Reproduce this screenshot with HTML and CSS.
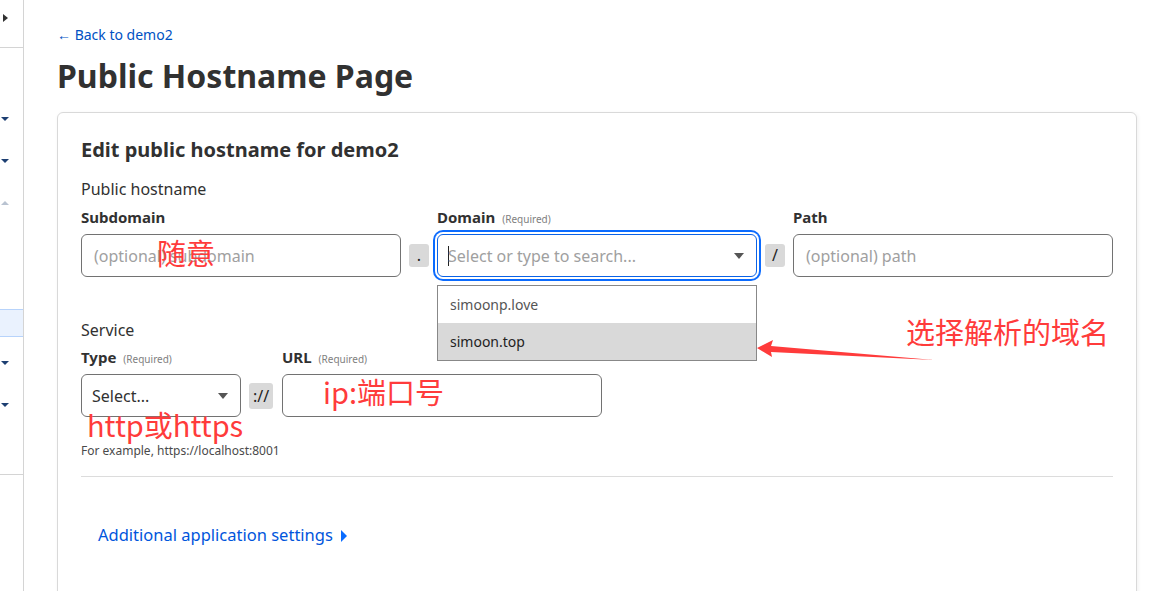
FILE: index.html
```html
<!DOCTYPE html>
<html lang="en">
<head>
<meta charset="utf-8">
<title>Public Hostname Page</title>
<link rel="stylesheet" href="styles.css">
</head>
<body>
<div class="app">
  <aside class="sidebar">
    <div class="sb-top"><span class="tri-right"></span></div>
    <div class="sb-body">
      <div class="sb-item"><span class="caret-down"></span></div>
      <div class="sb-item"><span class="caret-down"></span></div>
      <div class="sb-item"><span class="caret-up"></span></div>
      <div class="sb-spacer"></div>
      <div class="sb-item sb-active"></div>
      <div class="sb-item"><span class="caret-down"></span></div>
      <div class="sb-item"><span class="caret-down"></span></div>
    </div>
  </aside>
  <main class="main">
    <a class="back" href="#">← Back to demo2</a>
    <h1 class="title">Public Hostname Page</h1>
    <section class="card">
      <h2 class="card-title">Edit public hostname for demo2</h2>
      <div class="group-label">Public hostname</div>
      <div class="host-row">
        <div class="field">
          <div class="label">Subdomain</div>
          <input class="input" type="text" placeholder="(optional) subdomain">
        </div>
        <div class="sep"><span class="sep-box">.</span></div>
        <div class="field field-domain">
          <div class="label">Domain <span class="req">(Required)</span></div>
          <div class="select focused">
            <span class="caret-line"></span><span class="ph">Select or type to search...</span>
            <span class="sel-caret"></span>
          </div>
          <ul class="menu">
            <li class="menu-item">simoonp.love</li>
            <li class="menu-item hover">simoon.top</li>
          </ul>
        </div>
        <div class="sep"><span class="sep-box">/</span></div>
        <div class="field">
          <div class="label">Path</div>
          <input class="input" type="text" placeholder="(optional) path">
        </div>
      </div>

      <div class="group-label service">Service</div>
      <div class="svc-row">
        <div class="field field-type">
          <div class="label">Type <span class="req">(Required)</span></div>
          <div class="select">
            <span class="val">Select...</span>
            <span class="sel-caret"></span>
          </div>
        </div>
        <div class="sep sep-scheme"><span class="sep-box">://</span></div>
        <div class="field field-url">
          <div class="label">URL <span class="req">(Required)</span></div>
          <input class="input" type="text">
        </div>
      </div>
      <div class="hint">For example, https://localhost:8001</div>
      <hr class="divider">
      <a class="more" href="#">Additional application settings <span class="tri-blue"></span></a>

      <div class="note note-sub">随意</div>
      <div class="note note-url">ip:端口号</div>
      <div class="note note-type">http或https</div>
      <div class="note note-domain">选择解析的域名</div>
      <svg class="arrow" width="200" height="30" viewBox="0 0 200 30">
        <polygon points="1,12 17,4 15,10 178,24 15,16 16,21" fill="#ff3b3b"/>
      </svg>
    </section>
  </main>
</div>
</body>
</html>
```
FILE: styles.css
```css
* { box-sizing: border-box; }
html, body { margin: 0; padding: 0; background: #fff; }
body {
  font-family: "Noto Sans", "Open Sans", sans-serif;
  color: #313131;
  width: 1169px;
  height: 591px;
  overflow: hidden;
}
.app { display: flex; height: 591px; }

/* sidebar */
.sidebar {
  width: 24px;
  flex: none;
  border-right: 1px solid #d4d4d4;
  display: flex;
  flex-direction: column;
}
.sb-top {
  height: 48px;
  border-bottom: 1px solid #d4d4d4;
  padding: 14px 0 0 3px;
}
.tri-right {
  display: block;
  width: 0; height: 0;
  border-top: 4px solid transparent;
  border-bottom: 4px solid transparent;
  border-left: 5px solid #313131;
}
.sb-body {
  display: flex;
  flex-direction: column;
  height: 427px;
  border-bottom: 1px solid #d4d4d4;
  padding-top: 50px;
}
.sb-item { height: 42px; padding: 19px 0 0 1px; flex: none; }
.sb-spacer { height: 85px; flex: none; }
.sb-active {
  height: 28px;
  background: #eaf2fe;
  border-top: 1px solid #b7d3fb;
  border-bottom: 1px solid #b7d3fb;
  margin-bottom: 5px;
}
.caret-down {
  display: block; width: 0; height: 0;
  border-left: 4px solid transparent;
  border-right: 4px solid transparent;
  border-top: 4px solid #1d3f72;
}
.caret-up {
  display: block; width: 0; height: 0;
  border-left: 4px solid transparent;
  border-right: 4px solid transparent;
  border-bottom: 4px solid #b9c3d1;
}

/* main */
.main { flex: 1; padding: 24px 32px 0 33px; }
.back {
  display: block;
  color: #0051c3;
  text-decoration: none;
  font-size: 14px;
  line-height: 22px;
}
.title {
  margin: 8px 0 0;
  font-size: 32px;
  line-height: 44px;
  font-weight: 700;
  color: #313131;
}
.card {
  position: relative;
  margin-top: 14px;
  border: 1px solid #d9d9d9;
  border-radius: 6px;
  box-shadow: 1px 1px 4px rgba(0,0,0,0.06);
  padding: 23px 23px 60px;
  height: 520px;
}
.card-title {
  margin: 0;
  font-size: 20px;
  line-height: 28px;
  font-weight: 700;
  color: #313131;
}
.group-label {
  margin-top: 14px;
  font-size: 16px;
  line-height: 22px;
}
.group-label.service { margin-top: 42px; }
.host-row, .svc-row { display: flex; align-items: flex-end; }
.field { width: 320px; flex: none; position: relative; }
.field-type { width: 160px; }
.label {
  display: flex;
  align-items: baseline;
  font-size: 15px;
  font-weight: 700;
  line-height: 20px;
  height: 20px;
  margin: 7px 0 7px;
  color: #313131;
}
.svc-row .label { margin: 6px 0 7px; }
.req { font-size: 10px; line-height: 10px; font-weight: 400; color: #808080; margin-left: 7px; }
.input, .select {
  display: block;
  width: 100%;
  height: 43px;
  border: 1px solid #727272;
  border-radius: 6px;
  padding: 0 12px;
  font-family: inherit;
  font-size: 16px;
  color: #313131;
  background: #fff;
  outline: none;
}
.input::placeholder { color: #a0a0a0; }
.select {
  display: flex;
  align-items: center;
  padding: 0 12px 0 10px;
  position: relative;
}
.select.focused {
  border-color: #0b62e6;
  box-shadow: 0 0 0 2px #fff, 0 0 0 4px #0b6bff;
}
.caret-line {
  display: inline-block;
  width: 1px; height: 20px;
  background: #222;
  margin-right: -1px;
}
.ph { color: #a0a0a0; }
.val { color: #313131; }
.sel-caret {
  margin-left: auto;
  width: 0; height: 0;
  border-left: 5px solid transparent;
  border-right: 5px solid transparent;
  border-top: 6px solid #555;
}
.sep {
  width: 36px;
  flex: none;
  height: 43px;
  display: flex;
  align-items: center;
  justify-content: center;
}
.sep-box {
  width: 20px;
  height: 23px;
  background: #d9d9d9;
  border-radius: 3px;
  font-size: 16px;
  line-height: 23px;
  text-align: center;
  color: #222;
}
.sep-scheme { width: 41px; justify-content: flex-start; padding-left: 8px; }
.sep-scheme .sep-box { width: 24px; height: 26px; line-height: 26px; font-size: 16px; }

.menu {
  position: absolute;
  left: 0; right: 0;
  top: 85px;
  margin: 0; padding: 0;
  list-style: none;
  border: 1px solid #888;
  background: #fff;
  z-index: 2;
}
.menu-item {
  height: 37px;
  line-height: 37px;
  padding-left: 12px;
  font-size: 14px;
  color: #555;
}
.menu-item.hover { background: #d9d9d9; color: #222; }

.hint {
  margin-top: 26px;
  font-size: 12px;
  line-height: 16px;
  color: #4a4a4a;
}
.divider {
  border: 0;
  border-top: 1px solid #dcdcdc;
  margin: 17px 0 0;
}
.more {
  display: inline-block;
  margin: 46px 0 0 17px;
  color: #0055dc;
  font-size: 16.5px;
  line-height: 24px;
  text-decoration: none;
}
.tri-blue {
  display: inline-block;
  width: 0; height: 0;
  border-top: 6px solid transparent;
  border-bottom: 6px solid transparent;
  border-left: 6px solid #0a6cff;
  margin-left: 4px;
  vertical-align: -1px;
}

/* annotations */
.note {
  position: absolute;
  color: #ff3b3b;
  font-family: "Noto Sans CJK SC", "Noto Sans", sans-serif;
  font-size: 28px;
  line-height: 34px;
  white-space: nowrap;
  z-index: 3;
}
.note-sub { left: 99px; top: 122px; font-size: 29px; }
.note-url { left: 265px; top: 261px; font-size: 29px; }
.note-type { left: 29px; top: 294px; font-size: 29px; }
.note-domain { left: 848px; top: 201px; font-size: 29px; }
.arrow { position: absolute; left: 698px; top: 223px; z-index: 3; }
```
